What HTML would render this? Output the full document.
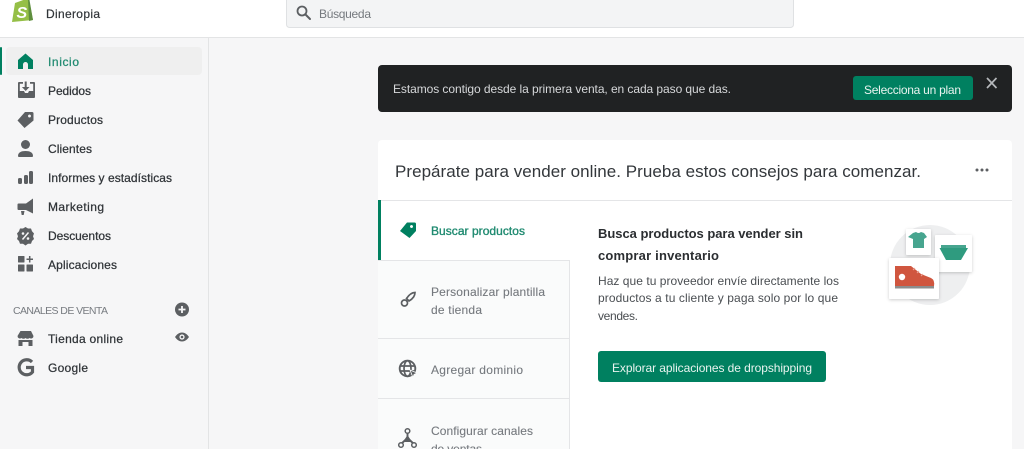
<!DOCTYPE html>
<html><head><meta charset="utf-8"><style>
html,body{margin:0;padding:0;background:#f6f6f7;overflow:hidden;width:1024px;height:449px}
svg{display:block}
text{font-family:"Liberation Sans",sans-serif;font-size:12px;fill:#303438}
.n{font-size:12px;stroke:#303438;stroke-width:.25px}
.g{fill:#75797e;font-size:12px;stroke:#75797e;stroke-width:.1px}
.i{fill:#5c5f62}
</style></head><body>
<svg width="1024" height="449" viewBox="0 0 1024 449" xmlns="http://www.w3.org/2000/svg">
<defs><filter id="s" x="-20%" y="-20%" width="140%" height="140%"><feDropShadow dx="0" dy="1" stdDeviation="1.500" flood-color="#000" flood-opacity=".2"/></filter></defs>
<rect width="1024" height="449" fill="#f6f6f7"/>
<!-- top bar -->
<rect width="1024" height="37" fill="#fff"/>
<rect y="37" width="1024" height="1" fill="#e3e4e5"/>
<path d="M15 3 L26 -1 L29 0 L33 20 L12 22 Z" fill="#95bf47"/>
<path d="M28 -1 L29.500 0 L33 20 L29 21Z" fill="#5e8e3e"/>
<text x="16.500" y="18" style="font-size:16px;font-weight:bold;font-style:italic;fill:#fff">S</text>
<text x="46" y="18" textLength="54" lengthAdjust="spacing" style="stroke:#303438;stroke-width:.2px">Dineropia</text>
<rect x="286.500" y="-4" width="507" height="31.500" rx="3" fill="#f3f4f5" stroke="#dfe1e3"/>
<circle cx="302" cy="11" r="4.500" fill="none" stroke="#5c5f62" stroke-width="1.800"/>
<path d="M305.500 14.500 L310 19" stroke="#5c5f62" stroke-width="2" stroke-linecap="round"/>
<text x="319" y="18" textLength="52" lengthAdjust="spacing" style="fill:#75797e">Búsqueda</text>
<!-- sidebar -->
<rect x="208" y="38" width="1" height="411" fill="#e3e4e5"/>
<rect x="6" y="47" width="196" height="28" rx="4" fill="#efefef"/>
<rect x="0" y="47" width="2" height="28" rx="1" fill="#008060"/>
<path d="M25.500 53.500 L33 60 V69 H28 V64.500 a2.500 2.500 0 0 0-5 0 V69 H18 V60Z" fill="#008060"/>
<text x="48" y="66" class="n" textLength="31" lengthAdjust="spacing" style="fill:#1f8a70;stroke:#1f8a70">Inicio</text>
<path fill-rule="evenodd" d="M18 83 a1 1 0 0 1 1-1 h4 v1.800 h-3.200 v7.200 h4.200 l1 2 h3 l1-2 h4.200 v-7.200 h-3.200 v-1.800 h4 a1 1 0 0 1 1 1 v14 a1 1 0 0 1-1 1 h-15 a1 1 0 0 1-1-1Z" class="i"/>
<path d="M24.700 81.500 h2 v5.500 h2.800 l-3.800 4 -3.800-4 h2.800Z" class="i"/>
<text x="48" y="95" class="n" textLength="43" lengthAdjust="spacing">Pedidos</text>
<path fill-rule="evenodd" d="M25 112 h7 a1.500 1.500 0 0 1 1.500 1.500 v7 L24.500 128 L17.500 120.500 Z M29.500 114.500 a1.500 1.500 0 1 0 .01 0Z" class="i"/>
<text x="48" y="124" class="n" textLength="55" lengthAdjust="spacing">Productos</text>
<circle cx="25.500" cy="144.500" r="4.500" class="i"/>
<path d="M18 156 c0-3.500 3-5 7.500-5 s7.500 1.500 7.500 5 c0 .8-.5 1-1.500 1 h-12 c-1 0-1.500-.2-1.500-1Z" class="i"/>
<text x="48" y="153" class="n" textLength="44" lengthAdjust="spacing">Clientes</text>
<rect x="18" y="178" width="4" height="6" rx="1.500" class="i"/>
<rect x="24" y="175" width="4" height="9" rx="1.500" class="i"/>
<rect x="29" y="171" width="4" height="13" rx="1.500" class="i"/>
<text x="48" y="182" class="n" textLength="124" lengthAdjust="spacing">Informes y estadísticas</text>
<path d="M33 198.500 V213.500 L26 210 H18.500 a1 1 0 0 1-1-1 v-4.500 a1 1 0 0 1 1-1 H26 Z" class="i"/>
<path d="M21 211 h3.500 l-.8 4 h-2Z" class="i"/>
<text x="48" y="211" class="n" textLength="56" lengthAdjust="spacing">Marketing</text>
<path d="M25.500 227 l2.500 1.500 h3 l1 2.700 2 2.300 -1 2.700 1 2.800 -2 2 -1 2.700 h-3 l-2.500 1.800 -2.500-1.800 h-3 l-1-2.700 -2-2 1-2.800 -1-2.700 2-2.300 1-2.700 h3Z" class="i"/>
<path d="M22.500 239.500 L28.500 232.500" stroke="#f6f6f7" stroke-width="1.500"/>
<circle cx="23" cy="233.500" r="1.300" fill="#f6f6f7"/><circle cx="28" cy="238.500" r="1.300" fill="#f6f6f7"/>
<text x="48" y="240" class="n" textLength="63" lengthAdjust="spacing">Descuentos</text>
<rect x="18" y="256" width="6.500" height="6.500" rx=".5" class="i"/>
<rect x="18" y="264.500" width="6.500" height="7" rx=".5" class="i"/>
<rect x="26.500" y="264.500" width="6.500" height="7" rx=".5" class="i"/>
<path d="M29.700 256 V262.500 M26.500 259.200 H33" stroke="#5c5f62" stroke-width="1.500"/>
<text x="48" y="269" class="n" textLength="69" lengthAdjust="spacing">Aplicaciones</text>
<text x="13" y="314" textLength="95" lengthAdjust="spacing" style="fill:#777b80;font-size:10.500px">CANALES DE VENTA</text>
<circle cx="182" cy="309.500" r="7" class="i"/>
<path d="M182 306 V313 M178.500 309.500 H185.500" stroke="#f6f6f7" stroke-width="1.800"/>
<path d="M20.500 331 H31 L33.500 336 a2.500 2.500 0 0 1-4 2 a3 3 0 0 1-4 0 a3 3 0 0 1-4 0 a2.500 2.500 0 0 1-4-2Z" class="i"/>
<path d="M18.500 340 h14 V346 h-4 v-4 h-6 v4 h-4Z" class="i"/>
<text x="48" y="343" class="n" textLength="75" lengthAdjust="spacing">Tienda online</text>
<path d="M175 337 C177 334 179.500 332.500 182 332.500 S187 334 189 337 C187 340 184.500 341.500 182 341.500 S177 340 175 337Z" class="i"/>
<circle cx="182" cy="337" r="2.600" fill="#f6f6f7"/><circle cx="182" cy="337" r="1.300" class="i"/>
<path d="M32 362 A7.500 7.500 0 1 0 32.500 372 V367.500 H26" fill="none" stroke="#5c5f62" stroke-width="3.200"/>
<text x="48" y="372" class="n" textLength="40" lengthAdjust="spacing">Google</text>
<!-- banner -->
<rect x="378" y="65" width="634" height="47" rx="4" fill="#202223"/>
<text x="393" y="93" textLength="338" lengthAdjust="spacing" style="fill:#d6d8da">Estamos contigo desde la primera venta, en cada paso que das.</text>
<rect x="853" y="76" width="120" height="24" rx="3" fill="#008060"/>
<text x="864" y="94" textLength="97" lengthAdjust="spacing" style="fill:#e8f3ef">Selecciona un plan</text>
<path d="M987 78 L996.500 88 M996.500 78 L987 88" stroke="#b5b8bb" stroke-width="1.700"/>
<!-- card -->
<path d="M378 449 V144 a4 4 0 0 1 4-4 H1008 a4 4 0 0 1 4 4 V449Z" fill="#fff"/>
<text x="395" y="177" textLength="526" lengthAdjust="spacing" style="font-size:17px;fill:#33373b">Prepárate para vender online. Prueba estos consejos para comenzar.</text>
<circle cx="977" cy="170" r="1.500" class="i"/><circle cx="982" cy="170" r="1.500" class="i"/><circle cx="987" cy="170" r="1.500" class="i"/>
<rect x="378" y="200" width="634" height="1" fill="#e4e5e7"/>
<!-- tabs -->
<rect x="378" y="261" width="191" height="188" fill="#fafbfb"/>
<rect x="569" y="261" width="1" height="188" fill="#e4e5e7"/>
<rect x="378" y="260" width="192" height="1" fill="#e4e5e7"/>
<rect x="378" y="338" width="192" height="1" fill="#e4e5e7"/>
<rect x="378" y="398" width="192" height="1" fill="#e4e5e7"/>
<rect x="378" y="200" width="3" height="60" fill="#008060"/>
<path fill-rule="evenodd" d="M407 222.500 h7.500 a1.500 1.500 0 0 1 1.500 1.500 v7 L409.500 238 L400 231 Z M411.500 225 a1.500 1.500 0 1 0 .01 0Z" fill="#008060"/>
<text x="431" y="235" textLength="94" lengthAdjust="spacing" style="fill:#1f8a70;stroke:#1f8a70;stroke-width:.35px">Buscar productos</text>
<path d="M415 292.500 c-3.500 0-6.500 3-8.500 6 l2.500 2.500 c3.500-2 6-5 6-8.500Z" fill="none" stroke="#5c5f62" stroke-width="1.700"/>
<circle cx="404.500" cy="303" r="3" fill="none" stroke="#5c5f62" stroke-width="1.700"/>
<text x="431" y="296" class="g" textLength="114" lengthAdjust="spacing">Personalizar plantilla</text>
<text x="431" y="314" class="g" textLength="51" lengthAdjust="spacing">de tienda</text>
<circle cx="407.500" cy="368.500" r="7.800" fill="none" stroke="#5c5f62" stroke-width="1.900"/>
<ellipse cx="407.500" cy="368.500" rx="3.500" ry="7.800" fill="none" stroke="#5c5f62" stroke-width="1.700"/>
<path d="M400 366 H415 M400 371 H415" stroke="#5c5f62" stroke-width="1.700"/>
<path d="M410 370 L417 373 L414 374.500 L413 377.500Z" fill="#5c5f62" stroke="#fafbfb" stroke-width=".8"/>
<text x="431" y="374" class="g" textLength="92" lengthAdjust="spacing">Agregar dominio</text>
<path d="M407.500 431 V438 L400 445 M407.500 438 L415 445" stroke="#5c5f62" stroke-width="1.900" fill="none"/>
<circle cx="407.500" cy="431" r="2.300" fill="#fafbfb" stroke="#5c5f62" stroke-width="1.500"/>
<circle cx="401" cy="445" r="2.300" fill="#fafbfb" stroke="#5c5f62" stroke-width="1.500"/>
<circle cx="414" cy="445" r="2.300" fill="#fafbfb" stroke="#5c5f62" stroke-width="1.500"/>
<path d="M407.500 435 L412 442 H403Z" fill="#5c5f62"/>
<text x="431" y="435" class="g" textLength="102" lengthAdjust="spacing">Configurar canales</text>
<text x="431" y="453" class="g" textLength="51" lengthAdjust="spacing">de ventas</text>
<!-- content -->
<text x="598" y="238" textLength="205" lengthAdjust="spacing" style="font-size:13px;font-weight:bold;fill:#2b2e31">Busca productos para vender sin</text>
<text x="598" y="260" textLength="121" lengthAdjust="spacing" style="font-size:13px;font-weight:bold;fill:#2b2e31">comprar inventario</text>
<text x="598" y="285" textLength="241" lengthAdjust="spacing" style="fill:#4a4e52">Haz que tu proveedor envíe directamente los</text>
<text x="598" y="302" textLength="240" lengthAdjust="spacing" style="fill:#4a4e52">productos a tu cliente y paga solo por lo que</text>
<text x="598" y="320" textLength="40" lengthAdjust="spacing" style="fill:#4a4e52">vendes.</text>
<rect x="598" y="351" width="228" height="31" rx="3" fill="#008060"/>
<text x="612" y="372" textLength="200" lengthAdjust="spacing" style="fill:#e8f3ef">Explorar aplicaciones de dropshipping</text>
<!-- illustration -->
<circle cx="930" cy="265" r="40" fill="#eeeff0"/>
<rect x="906" y="229" width="25" height="26" rx="1" fill="#fff" filter="url(#s)"/>
<path d="M913 233 L916 232 Q918.500 234 921 232 L924 233 L927 237 L924 239 V248 H913 V239 L908 237Z" fill="#47a58f"/>
<rect x="935" y="235" width="37" height="37" rx="1" fill="#fff" filter="url(#s)"/>
<rect x="941" y="245" width="25" height="3" fill="#47a58f"/>
<path d="M939.500 248 H968 L961 260 H946Z" fill="#2f9b7f"/>
<rect x="889" y="258" width="50" height="41" rx="1" fill="#fff" filter="url(#s)"/>
<path d="M895 266 H911 L921 274 L931 278 Q935 280 934 286 H895Z" fill="#d0563f"/>
<path d="M913 270 l2-2 M917 273 l2-2 M921 276 l2-2" stroke="#eba596" stroke-width="1"/>
<rect x="895" y="286" width="39" height="2.500" fill="#8d8d8d"/>
<circle cx="902" cy="277" r="3.200" fill="#fff"/>
</svg>
</body></html>
